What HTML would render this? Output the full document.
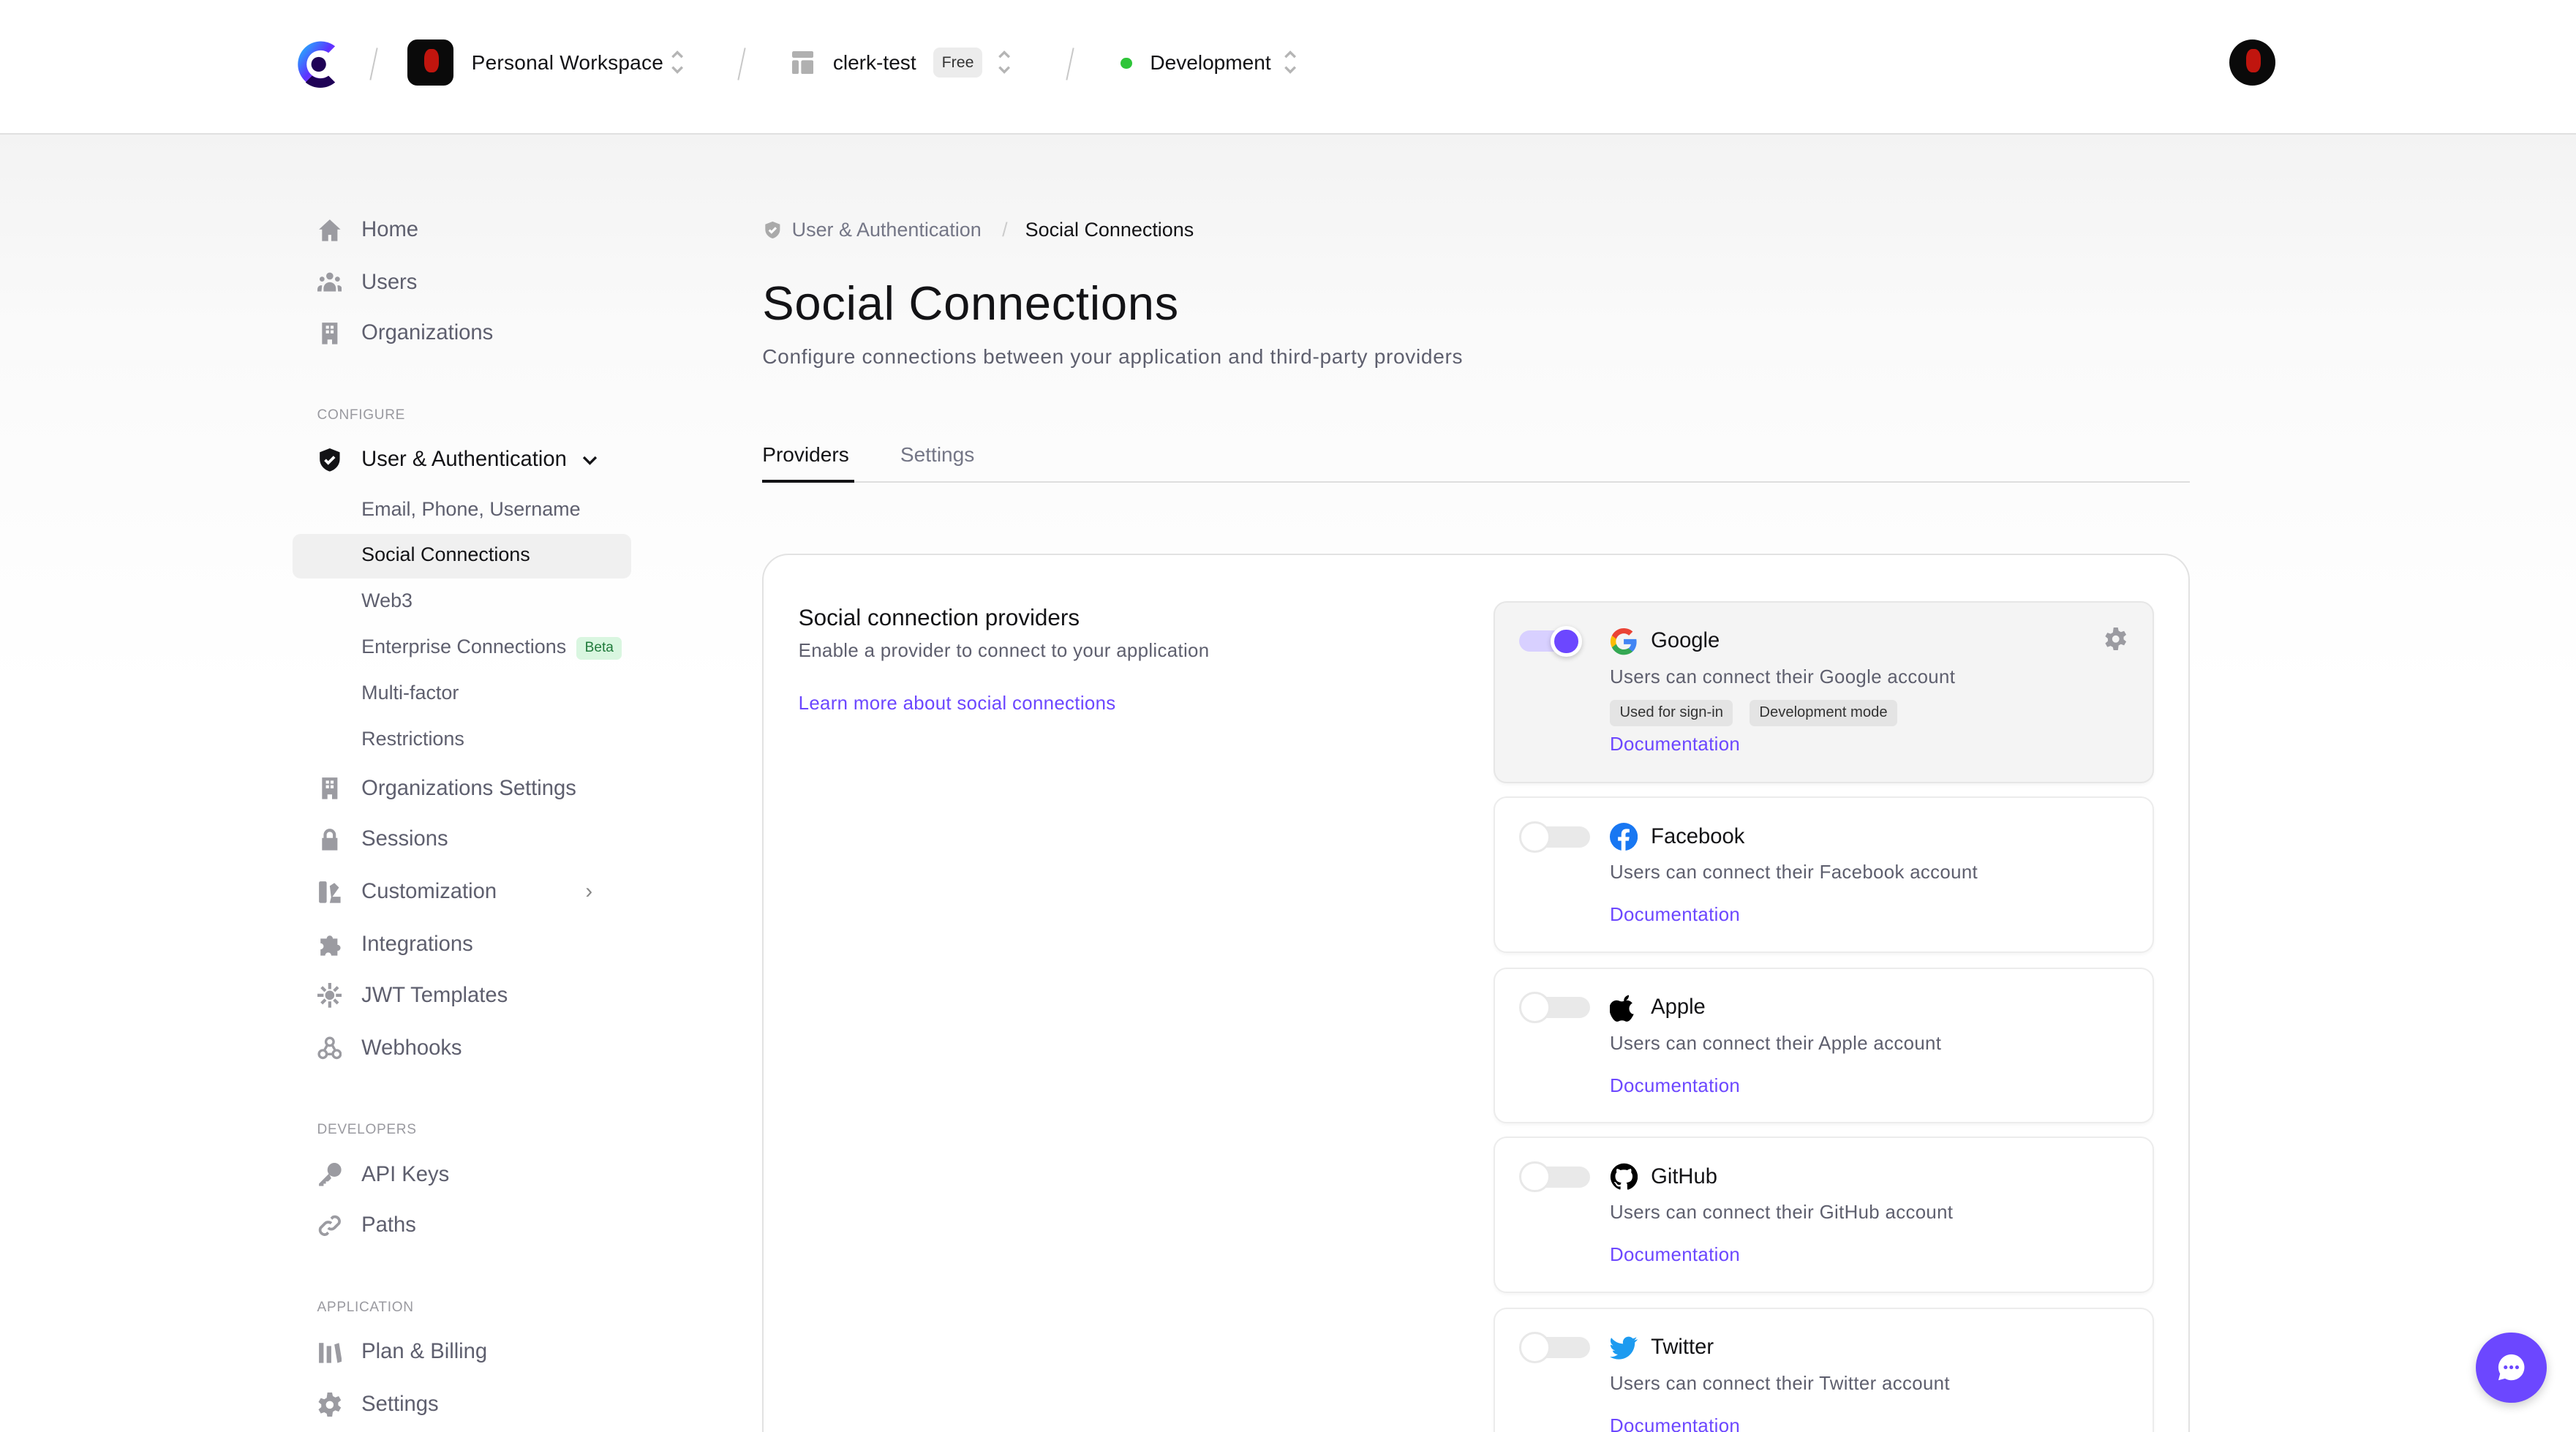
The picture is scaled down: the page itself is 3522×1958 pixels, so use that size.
<!DOCTYPE html>
<html><head><meta charset="utf-8"><style>
*{box-sizing:border-box;margin:0;padding:0}
html,body{width:3522px;height:1958px;overflow:hidden;background:#fff}
#r{zoom:2.2462;width:1568px;height:872px;position:relative;font-family:"Liberation Sans",sans-serif;color:#131316;background:linear-gradient(#f3f3f3 82px,#fafafa 200px,#fff 420px);overflow:hidden}
.a{position:absolute;white-space:nowrap}
.hdr{position:absolute;left:0;top:0;width:1568px;height:82px;background:#fff;border-bottom:1px solid #e0e0e0}
.sl{position:absolute;width:1px;height:20px;background:#c8c8c8;transform:rotate(12deg)}
.ud{position:absolute;width:9px;height:16px}
.nav{position:absolute;left:193px;font-size:13px;color:#5e5f6e;display:flex;align-items:center;height:20px}
.nav svg{width:15px;height:15px;margin-right:12px;fill:#9b9ba1}
.sub{position:absolute;left:220px;font-size:12px;color:#5e5f6e}
.cap{position:absolute;left:193px;font-size:8.5px;color:#9a9aa0;letter-spacing:.3px}
.pc{position:absolute;left:909px;width:402px;border:1px solid #ececec;border-radius:8px;background:#fff;box-shadow:0 1px 2px rgba(0,0,0,.04)}
.tg{position:absolute;left:15px;top:14px;width:42px;height:18px}
.tg .t{position:absolute;left:3px;top:3px;width:40px;height:13px;border-radius:7px;background:#e9e9e9}
.tg .k{position:absolute;left:0;top:0;width:19px;height:19px;border-radius:50%;background:#fff;border:1.5px solid #e8e8e8}
.pn{position:absolute;left:70px;top:15px;font-size:13px;display:flex;align-items:center}
.pn svg{width:17px;height:17px;margin-right:8px}
.pd{position:absolute;left:70px;font-size:11.5px;color:#5e5f6e;letter-spacing:.15px}
.doc{position:absolute;left:70px;font-size:11.5px;color:#6c47ff;letter-spacing:.15px}
</style></head><body><div id="r">
<div class="hdr">
 <svg class="a" style="left:179px;top:23px" width="29" height="32" viewBox="0 0 29 32"><defs><linearGradient id="g" x1="0" y1="0" x2="1" y2="1"><stop offset="0" stop-color="#17ccfc"/><stop offset=".5" stop-color="#5d31ff"/><stop offset="1" stop-color="#f35aff"/></linearGradient></defs><path d="M25 5A14 14 0 1 0 25 27L21 23A8.5 8.5 0 1 1 21 9Z" fill="url(#g)"/><circle cx="15" cy="16" r="4.5" fill="#1f0256"/><path d="M7 27A14 14 0 0 0 25 27L21 23A8.5 8.5 0 0 1 11 23Z" fill="#1f0256"/></svg>
 <div class="sl" style="left:227px;top:29px"></div>
 <div class="a" style="left:248px;top:24px;width:28px;height:28px;border-radius:6px;background:#0a0a0a;overflow:hidden"><div style="position:absolute;left:10px;top:6px;width:9px;height:14px;border-radius:40%;background:#c0150e"></div></div>
 <div class="a" style="left:287px;top:31px;font-size:12.5px;letter-spacing:.1px">Personal Workspace</div>
 <svg class="ud" style="left:408px;top:30px" viewBox="0 0 9 16" fill="none" stroke="#b5b5b5" stroke-width="1.5"><path d="M1.5 5l3-3 3 3M1.5 11l3 3 3-3"/></svg>
 <div class="sl" style="left:451px;top:29px"></div>
 <svg class="a" style="left:482px;top:31px" width="13" height="14" viewBox="0 0 13 14" fill="#b0b0b0"><rect x="0" y="0" width="13" height="4" rx="1"/><rect x="0" y="5.5" width="4" height="8.5" rx="1"/><rect x="5.5" y="5.5" width="7.5" height="8.5" rx="1"/></svg>
 <div class="a" style="left:507px;top:31px;font-size:12.5px">clerk-test</div>
 <div class="a" style="left:568px;top:29px;width:30px;height:18px;border-radius:4px;background:#ececec;font-size:9.5px;line-height:18px;text-align:center;color:#333">Free</div>
 <svg class="ud" style="left:607px;top:30px" viewBox="0 0 9 16" fill="none" stroke="#b5b5b5" stroke-width="1.5"><path d="M1.5 5l3-3 3 3M1.5 11l3 3 3-3"/></svg>
 <div class="sl" style="left:651px;top:29px"></div>
 <div class="a" style="left:682px;top:35px;width:7px;height:7px;border-radius:50%;background:#2ec539"></div>
 <div class="a" style="left:700px;top:31px;font-size:12.5px">Development</div>
 <svg class="ud" style="left:781px;top:30px" viewBox="0 0 9 16" fill="none" stroke="#b5b5b5" stroke-width="1.5"><path d="M1.5 5l3-3 3 3M1.5 11l3 3 3-3"/></svg>
 <div class="a" style="left:1357px;top:24px;width:28px;height:28px;border-radius:50%;background:#0a0a0a;overflow:hidden"><div style="position:absolute;left:10px;top:6px;width:9px;height:14px;border-radius:40%;background:#c0150e"></div></div>
</div>

<div class="nav" style="top:130px"><svg viewBox="0 0 16 16"><path d="M8 1L1 7.5h2V15h4v-4h2v4h4V7.5h2z"/></svg>Home</div>
<div class="nav" style="top:162px"><svg viewBox="0 0 16 16"><circle cx="8" cy="4" r="2.3"/><circle cx="3" cy="6" r="1.6"/><circle cx="13" cy="6" r="1.6"/><path d="M4 14v-2a4 4 0 0 1 8 0v2zM0 14v-1.5a2.5 2.5 0 0 1 3-2.4L2.6 14zM16 14v-1.5a2.5 2.5 0 0 0-3-2.4l.4 3.9z"/></svg>Users</div>
<div class="nav" style="top:193px"><svg viewBox="0 0 16 16"><path d="M3 1h10v14H9.5v-3h-3v3H3zM5.5 3v2h2V3zm3 0v2h2V3zm-3 3v2h2V6zm3 0v2h2V6z" fill-rule="evenodd"/></svg>Organizations</div>
<div class="cap" style="top:248px">CONFIGURE</div>
<div class="nav" style="top:270px;color:#131316"><svg viewBox="0 0 16 16" style="fill:#131316"><path d="M8 .5L1.5 3v4.5c0 4 3 7 6.5 8 3.5-1 6.5-4 6.5-8V3z"/><path d="M5 8l2 2 4-4" stroke="#fff" stroke-width="1.8" fill="none"/></svg>User &amp; Authentication<svg viewBox="0 0 16 16" style="width:12px;height:12px;margin-left:8px;fill:none;stroke:#131316;stroke-width:2"><path d="M3 6l5 5 5-5"/></svg></div>
<div class="sub" style="top:303px">Email, Phone, Username</div>
<div class="a" style="left:178px;top:325px;width:206px;height:27px;border-radius:5px;background:#f0f0f0"></div>
<div class="sub" style="top:331px;color:#131316">Social Connections</div>
<div class="sub" style="top:359px">Web3</div>
<div class="sub" style="top:387px">Enterprise Connections <span style="display:inline-block;font-size:8.5px;background:#d9f6e0;color:#1f7a3a;border-radius:3px;padding:2px 5px;margin-left:3px;vertical-align:1px">Beta</span></div>
<div class="sub" style="top:415px">Multi-factor</div>
<div class="sub" style="top:443px">Restrictions</div>
<div class="nav" style="top:470px"><svg viewBox="0 0 16 16"><path d="M3 1h10v14H9.5v-3h-3v3H3zM5.5 3v2h2V3zm3 0v2h2V3zm-3 3v2h2V6zm3 0v2h2V6z" fill-rule="evenodd"/></svg>Organizations Settings</div>
<div class="nav" style="top:501px"><svg viewBox="0 0 16 16"><path d="M4 7V5a4 4 0 0 1 8 0v2h1v8H3V7zm2 0h4V5a2 2 0 0 0-4 0z"/></svg>Sessions</div>
<div class="nav" style="top:533px"><svg viewBox="0 0 16 16"><rect x="1" y="1" width="5" height="14" rx="1"/><path d="M8 4l3-2 3 3-5 7zM9 11h6v4H8z"/></svg>Customization<span style="margin-left:54px;color:#888">›</span></div>
<div class="nav" style="top:565px"><svg viewBox="0 0 16 16"><path d="M2 4h4a2 2 0 1 1 4 0h3v4a2 2 0 1 1 0 4v3H9a2 2 0 1 0-4 0H2v-4a2 2 0 1 0 0-4z"/></svg>Integrations</div>
<div class="nav" style="top:596px"><svg viewBox="0 0 16 16"><circle cx="8" cy="8" r="3"/><path d="M7 0h2v4H7zM7 12h2v4H7zM0 7h4v2H0zM12 7h4v2h-4zM2 3.4L3.4 2l2.5 2.5-1.4 1.4zM10.1 11.5l1.4-1.4 2.5 2.5-1.4 1.4zM2 12.6l2.5-2.5 1.4 1.4L3.4 14zM10.1 4.5L12.6 2 14 3.4l-2.5 2.5z"/></svg>JWT Templates</div>
<div class="nav" style="top:628px"><svg viewBox="0 0 16 16" style="fill:none;stroke:#9b9ba1;stroke-width:1.6"><circle cx="8" cy="4" r="2.5"/><circle cx="3.5" cy="12" r="2.5"/><circle cx="12.5" cy="12" r="2.5"/><path d="M6.5 6L4.5 9.5M9.5 6l2 3.5M6 12h4"/></svg>Webhooks</div>
<div class="cap" style="top:683px">DEVELOPERS</div>
<div class="nav" style="top:705px"><svg viewBox="0 0 16 16"><circle cx="11" cy="5" r="4.5"/><path d="M7.5 7.5L1 14v1.5h3V14h1.5v-1.5H7L9 10.5z"/></svg>API Keys</div>
<div class="nav" style="top:736px"><svg viewBox="0 0 16 16" style="fill:none;stroke:#9b9ba1;stroke-width:1.8"><path d="M7 9.5a3 3 0 0 0 4 0l3-3a3 3 0 0 0-4-4L9 3.5M9 6.5a3 3 0 0 0-4 0l-3 3a3 3 0 0 0 4 4l1-1"/></svg>Paths</div>
<div class="cap" style="top:791px">APPLICATION</div>
<div class="nav" style="top:813px"><svg viewBox="0 0 16 16"><rect x="1" y="2" width="3" height="13"/><rect x="6" y="4" width="3" height="11"/><path d="M11 3l3-1 2 12-3 1z"/></svg>Plan &amp; Billing</div>
<div class="nav" style="top:845px"><svg viewBox="0 0 16 16"><path d="M6.5 0h3l.5 2.3 1.6.9 2.2-.8 1.5 2.6-1.8 1.5v1.8l1.8 1.5-1.5 2.6-2.2-.8-1.6.9L9.5 16h-3L6 13.7l-1.6-.9-2.2.8L.7 11l1.8-1.5V7.7L.7 6.2l1.5-2.6 2.2.8L6 3.5zM8 5.5a2.5 2.5 0 1 0 0 5 2.5 2.5 0 0 0 0-5z" fill-rule="evenodd"/></svg>Settings</div>

<svg class="a" style="left:465px;top:134px" width="11" height="12" viewBox="0 0 16 16"><path d="M8 .5L1.5 3v4.5c0 4 3 7 6.5 8 3.5-1 6.5-4 6.5-8V3z" fill="#aaa"/><path d="M5 8l2 2 4-4" stroke="#fff" stroke-width="2" fill="none"/></svg>
<div class="a" style="left:482px;top:133px;font-size:12px;color:#747686">User &amp; Authentication</div>
<div class="a" style="left:610px;top:133px;font-size:12px;color:#ccc">/</div>
<div class="a" style="left:624px;top:133px;font-size:12px;color:#131316">Social Connections</div>
<div class="a" style="left:464px;top:168px;font-size:29px;color:#131316;letter-spacing:.3px">Social Connections</div>
<div class="a" style="left:464px;top:210px;font-size:12.5px;color:#5e5f6e;letter-spacing:.3px">Configure connections between your application and third-party providers</div>
<div class="a" style="left:464px;top:270px;font-size:12.5px;color:#131316">Providers</div>
<div class="a" style="left:548px;top:270px;font-size:12.5px;color:#747686">Settings</div>
<div class="a" style="left:464px;top:293px;width:869px;height:1px;background:#dedede"></div>
<div class="a" style="left:464px;top:292px;width:56px;height:2px;background:#131316"></div>

<div class="a" style="left:464px;top:337px;width:869px;height:560px;border:1px solid #e2e2e2;border-radius:16px;background:#fff"></div>
<div class="a" style="left:486px;top:368px;font-size:14px">Social connection providers</div>
<div class="a" style="left:486px;top:390px;font-size:11.5px;color:#5e5f6e;letter-spacing:.15px">Enable a provider to connect to your application</div>
<div class="a" style="left:486px;top:422px;font-size:11.5px;color:#6c47ff;letter-spacing:.15px">Learn more about social connections</div>

<div class="pc" style="top:366px;height:111px;background:#f4f4f4;border-color:#e6e6e6">
 <div class="tg"><div class="t" style="background:#d8d0ff;left:0;width:36px"></div><div class="k" style="left:19px;background:#6c47ff;border:2.5px solid #fff;box-shadow:0 1px 3px rgba(0,0,0,.2)"></div></div>
 <div class="pn"><svg viewBox="0 0 24 24"><path d="M23 12.3c0-.8-.1-1.6-.2-2.3H12v4.4h6.2a5.3 5.3 0 0 1-2.3 3.5v2.8h3.7c2.2-2 3.4-5 3.4-8.4z" fill="#4285f4"/><path d="M12 23.5c3.1 0 5.7-1 7.6-2.8l-3.7-2.9c-1 .7-2.3 1.1-3.9 1.1-3 0-5.5-2-6.4-4.7H1.8v2.9A11.5 11.5 0 0 0 12 23.5z" fill="#34a853"/><path d="M5.6 14.2a6.9 6.9 0 0 1 0-4.4V6.9H1.8a11.5 11.5 0 0 0 0 10.2z" fill="#fbbc05"/><path d="M12 5.1c1.7 0 3.2.6 4.4 1.7l3.3-3.3A11.5 11.5 0 0 0 1.8 6.9l3.8 2.9C6.5 7.1 9 5.1 12 5.1z" fill="#ea4335"/></svg>Google</div>
 <svg class="a" style="left:371px;top:15px" width="14" height="14" viewBox="0 0 16 16" fill="#9b9ba1"><path d="M6.5 0h3l.5 2.3 1.6.9 2.2-.8 1.5 2.6-1.8 1.5v1.8l1.8 1.5-1.5 2.6-2.2-.8-1.6.9L9.5 16h-3L6 13.7l-1.6-.9-2.2.8L.7 11l1.8-1.5V7.7L.7 6.2l1.5-2.6 2.2.8L6 3.5zM8 5.5a2.5 2.5 0 1 0 0 5 2.5 2.5 0 0 0 0-5z" fill-rule="evenodd"/></svg>
 <div class="pd" style="top:39px">Users can connect their Google account</div>
 <div class="a" style="left:70px;top:59px;font-size:9px;color:#333;background:#e4e4e4;border-radius:3px;padding:3px 6px">Used for sign-in</div>
 <div class="a" style="left:155px;top:59px;font-size:9px;color:#333;background:#e4e4e4;border-radius:3px;padding:3px 6px">Development mode</div>
 <div class="doc" style="top:80px">Documentation</div>
</div>

<div class="pc" style="top:485px;height:95px">
 <div class="tg"><div class="t"></div><div class="k"></div></div>
 <div class="pn"><svg viewBox="0 0 24 24"><circle cx="12" cy="12" r="12" fill="#1877f2"/><path d="M13.5 24v-8.5h2.8l.5-3.3h-3.3v-2.1c0-.9.5-1.8 1.9-1.8h1.5V5.5s-1.3-.2-2.6-.2c-2.7 0-4.4 1.6-4.4 4.5v2.4H7v3.3h2.9V24z" fill="#fff"/></svg>Facebook</div>
 <div class="pd" style="top:39px">Users can connect their Facebook account</div>
 <div class="doc" style="top:65px">Documentation</div>
</div>

<div class="pc" style="top:589px;height:95px">
 <div class="tg"><div class="t"></div><div class="k"></div></div>
 <div class="pn"><svg viewBox="0 0 24 24"><path d="M16.4 1c.1 1.3-.4 2.5-1.1 3.4-.8.9-2 1.6-3.2 1.5-.1-1.2.5-2.5 1.2-3.3.8-.9 2.1-1.5 3.1-1.6zM20.6 17.3c-.6 1.3-.9 1.9-1.6 3-1 1.6-2.5 3.5-4.3 3.5-1.6 0-2-1-4.2-1s-2.7 1-4.2 1c-1.8 0-3.2-1.8-4.2-3.3-2.800-4.3-3.1-9.3-1.4-12 1.2-1.9 3.2-3 5-3 1.9 0 3 1 4.6 1 1.5 0 2.4-1 4.5-1 1.6 0 3.3.9 4.6 2.4-4 2.2-3.4 8 .2 9.4z"/></svg>Apple</div>
 <div class="pd" style="top:39px">Users can connect their Apple account</div>
 <div class="doc" style="top:65px">Documentation</div>
</div>

<div class="pc" style="top:692px;height:95px">
 <div class="tg"><div class="t"></div><div class="k"></div></div>
 <div class="pn"><svg viewBox="0 0 24 24"><path d="M12 .5a11.5 11.5 0 0 0-3.6 22.4c.6.1.8-.3.8-.6v-2c-3.2.7-3.9-1.5-3.9-1.5-.5-1.3-1.300-1.7-1.3-1.7-1-.7.1-.7.1-.7 1.2.1 1.8 1.2 1.8 1.2 1 1.8 2.7 1.3 3.4 1 .1-.8.4-1.3.7-1.6-2.6-.3-5.3-1.3-5.3-5.7 0-1.3.5-2.3 1.2-3.1-.1-.3-.5-1.5.1-3.1 0 0 1-.3 3.2 1.2a11 11 0 0 1 5.8 0c2.2-1.5 3.2-1.2 3.2-1.2.6 1.6.2 2.8.1 3.1.7.8 1.2 1.9 1.2 3.1 0 4.4-2.7 5.4-5.3 5.7.4.4.8 1.1.8 2.2v3.2c0 .3.2.7.8.6A11.5 11.5 0 0 0 12 .5z"/></svg>GitHub</div>
 <div class="pd" style="top:39px">Users can connect their GitHub account</div>
 <div class="doc" style="top:65px">Documentation</div>
</div>

<div class="pc" style="top:796px;height:100px">
 <div class="tg"><div class="t"></div><div class="k"></div></div>
 <div class="pn"><svg viewBox="0 0 24 24"><path d="M23.6 4.6c-.9.4-1.8.6-2.8.8a4.9 4.9 0 0 0 2.1-2.7c-.9.6-2 1-3.1 1.2a4.9 4.9 0 0 0-8.4 4.5A14 14 0 0 1 1.3 3.2a4.9 4.9 0 0 0 1.5 6.6 4.9 4.9 0 0 1-2.2-.6v.1c0 2.4 1.7 4.4 3.9 4.8a4.9 4.9 0 0 1-2.2.1 4.9 4.9 0 0 0 4.6 3.4A9.9 9.9 0 0 1 0 19.600 14 14 0 0 0 7.5 21.8c9.1 0 14-7.5 14-14v-.6c1-.7 1.8-1.6 2.5-2.6z" fill="#1d9bf0"/></svg>Twitter</div>
 <div class="pd" style="top:39px">Users can connect their Twitter account</div>
 <div class="doc" style="top:65px">Documentation</div>
</div>

<div class="a" style="left:1507px;top:811px;width:43px;height:43px;border-radius:50%;background:#6c47ff;box-shadow:0 2px 6px rgba(0,0,0,.2)">
 <svg style="position:absolute;left:11px;top:11px" width="21" height="21" viewBox="0 0 24 24"><path d="M12 3a9 9 0 0 0-7.8 13.5L3 21l4.6-1.2A9 9 0 1 0 12 3z" fill="#fff"/><circle cx="8" cy="12" r="1.3" fill="#6c47ff"/><circle cx="12" cy="12" r="1.3" fill="#6c47ff"/><circle cx="16" cy="12" r="1.3" fill="#6c47ff"/></svg>
</div>
</div></body></html>
